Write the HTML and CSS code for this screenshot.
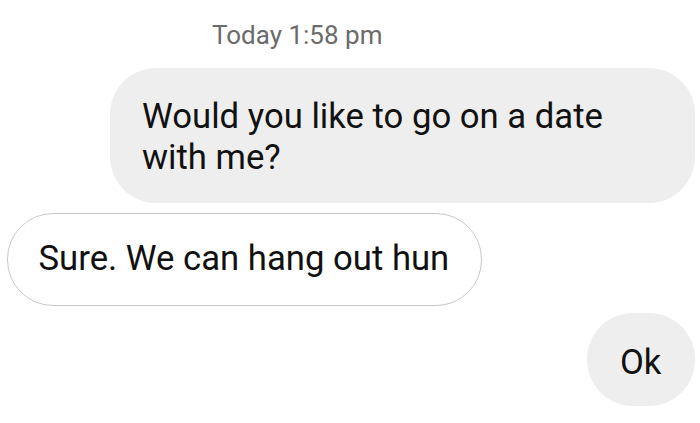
FILE: index.html
```html
<!DOCTYPE html>
<html>
<head>
<meta charset="utf-8">
<link rel="stylesheet" href="styles.css">
</head>
<body>
<div class="chat">
  <div class="time">Today 1:58 pm</div>
  <div class="row out">
    <div class="bubble sent wide">Would you like to go on a date with me?</div>
  </div>
  <div class="row in">
    <div class="bubble recv">Sure. We can hang out hun</div>
  </div>
  <div class="row out">
    <div class="bubble sent ok">Ok</div>
  </div>
</div>
</body>
</html>
```
FILE: styles.css
```css
html, body {
  margin: 0;
  padding: 0;
  background: #ffffff;
}
.chat {
  width: 700px;
  height: 423px;
  overflow: hidden;
  font-family: Roboto, "Liberation Sans", sans-serif;
  display: flex;
  flex-direction: column;
}
.time {
  margin: 20px 0 0 212px;
  font-size: 26px;
  line-height: 30px;
  color: #6b6b6b;
}
.row {
  display: flex;
}
.row.out {
  justify-content: flex-end;
  padding-right: 5px;
}
.row.in {
  padding-left: 7px;
}
.bubble {
  font-size: 34.7px;
  line-height: 41px;
  color: #111111;
  box-sizing: border-box;
}
.sent {
  background: #eeeeee;
}
.wide {
  margin-top: 18px;
  width: 585px;
  height: 135px;
  border-radius: 46px;
  padding: 28px 60px 0 32px;
}
.recv {
  margin-top: 10px;
  width: 475px;
  height: 93px;
  border: 1.5px solid #c8c8c8;
  border-radius: 46px;
  padding: 24px 0 0 30.5px;
  background: #ffffff;
}
.ok {
  margin-top: 7px;
  width: 108px;
  height: 93px;
  border-radius: 46px;
  padding: 29px 0 0 33px;
}
```
